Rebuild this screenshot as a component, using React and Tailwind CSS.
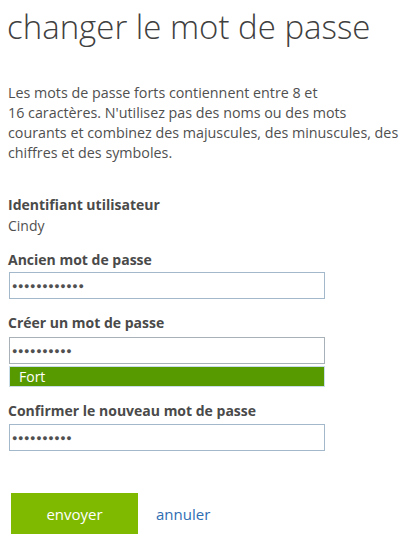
import React from "react";

const Dots = ({ count }) => (
  <span className="text-[9px] tracking-[0.6px] text-[#505050] leading-none">
    {"●".repeat(count)}
  </span>
);

const PasswordBox = ({ count, gray }) => (
  <div
    className={
      "ml-[9px] flex h-[27px] w-[316px] items-center border pl-[2px] " +
      (gray ? "border-[#a9b1b8]" : "border-[#a3b8cb]")
    }
  >
    <Dots count={count} />
  </div>
);

export default function App() {
  return (
    <div
      className="h-[540px] w-[408px] overflow-hidden bg-white text-[#505050]"
      style={{ fontFamily: '"Open Sans", "Segoe UI", sans-serif' }}
    >
      {/* Title */}
      <h1 className="pl-[7px] pt-[5px] text-[33px] font-light leading-[44px] text-[#404040]">
        changer le mot de passe
      </h1>

      {/* Explanation */}
      <p className="mt-[34px] pl-[8px] text-[14.3px] leading-[20px] whitespace-nowrap">
        Les mots de passe forts contiennent entre 8 et
        <br />
        16 caractères. N'utilisez pas des noms ou des mots
        <br />
        courants et combinez des majuscules, des minuscules, des
        <br />
        chiffres et des symboles.
      </p>

      {/* User */}
      <div className="mt-[32px] pl-[8px] text-[14px] font-bold leading-[20px] text-[#4a4a4a]">
        Identifiant utilisateur
      </div>
      <div className="mt-[1px] pl-[8px] text-[14px] leading-[20px]">Cindy</div>

      {/* Old password */}
      <div className="mt-[14px] pl-[8px] text-[14px] font-bold leading-[20px] text-[#4a4a4a]">
        Ancien mot de passe
      </div>
      <div className="mt-[2px]">
        <PasswordBox count={12} />
      </div>

      {/* New password */}
      <div className="mt-[14px] pl-[8px] text-[14px] font-bold leading-[20px] text-[#4a4a4a]">
        Créer un mot de passe
      </div>
      <div className="mt-[4px]">
        <PasswordBox count={10} gray />
      </div>
      <div className="ml-[9px] mt-[2px] flex h-[21px] w-[316px] items-center border border-[#c9dde9] bg-[#579a00] pl-[9px] text-[14px] leading-[20px] text-white">
        Fort
      </div>

      {/* Confirm */}
      <div className="mt-[14px] pl-[8px] text-[14px] font-bold leading-[20px] text-[#4a4a4a]">
        Confirmer le nouveau mot de passe
      </div>
      <div className="mt-[3px]">
        <PasswordBox count={10} />
      </div>

      {/* Actions */}
      <div className="mt-[42px] flex items-center pl-[11px]">
        <button className="h-[41px] w-[127px] bg-[#7fba00] pt-[2px] text-[15px] text-white">
          envoyer
        </button>
        <a className="ml-[18px] pt-[2px] text-[15px] text-[#2f6db3]" href="#">
          annuler
        </a>
      </div>
    </div>
  );
}
